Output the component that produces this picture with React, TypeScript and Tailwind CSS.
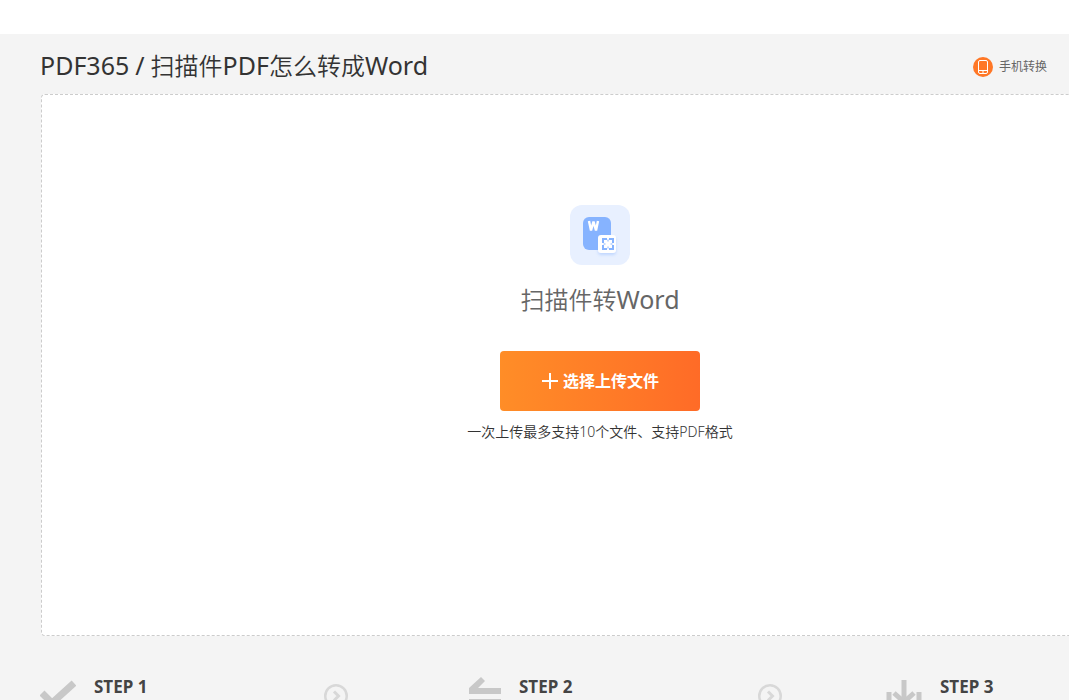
const STEPS = [
  { title: 'STEP 1', icon: 'check' },
  { title: 'STEP 2', icon: 'convert' },
  { title: 'STEP 3', icon: 'download' },
];

const PhoneIcon = () => (
  <svg width="20" height="20" viewBox="0 0 20 20" fill="none" aria-hidden="true">
    <circle cx="10" cy="10" r="10" fill="#ff7726" />
    <rect x="5.5" y="3.5" width="9" height="13" rx="1.5" stroke="#fff" />
    <path d="M6 13.5h8" stroke="#fff" />
    <path d="M9 15h2" stroke="#fff" />
  </svg>
);

const ScanToWordIcon = () => (
  <svg width="60" height="60" viewBox="0 0 60 60" fill="none" aria-hidden="true">
    <defs>
      <filter id="badge-shadow" x="-50%" y="-50%" width="200%" height="200%">
        <feDropShadow dx="0" dy="2" stdDeviation="1.5" floodColor="#86b1ff" floodOpacity="0.4" />
      </filter>
    </defs>
    <rect width="60" height="60" rx="12" fill="#e8f0ff" />
    <rect x="13" y="12" width="28" height="33" rx="6" fill="#86b3ff" />
    <path d="M19 16l2 9.5 2.5-9 2.5 9 2-9.5" stroke="#fff" strokeWidth="2.4" strokeLinejoin="bevel" />
    <rect x="28" y="30" width="18" height="18" rx="3" fill="#fff" filter="url(#badge-shadow)" />
    <path d="M37 34h-4v4M39 34h4v4M37 44h-4v-4M39 44h4v-4" stroke="#86b3ff" strokeWidth="2" />
    <path d="M38 34.5v2M38 41.5v2M33.5 39h2M40.5 39h2" stroke="#86b3ff" strokeWidth="1" />
  </svg>
);

const StepIcon = ({ name }: { name: string }) => {
  const width = name === 'convert' ? 32 : 36;
  return (
    <svg width={width} height="36" viewBox={`0 0 ${width} 36`} fill="none" stroke="#c8c8c8" aria-hidden="true">
      {name === 'check' && <path d="M2 17l10 10L34 7" strokeWidth="7" />}
      {name === 'convert' && (
        <g fill="#c8c8c8" stroke="none">
          <path d="M0 18v-6L12 1l4 4-7 7h23v6z" />
          <path d="M32 23v5L20 40l-4-4 7-7H0v-6z" />
        </g>
      )}
      {name === 'download' && (
        <>
          <path d="M18 4v20" strokeWidth="5" />
          <path d="M8 17l10 9 10-9" strokeWidth="5" />
          <path d="M3 16v18h30V16" strokeWidth="5" />
        </>
      )}
    </svg>
  );
};

const NextIcon = () => (
  <svg width="24" height="24" viewBox="0 0 24 24" fill="none" stroke="#d8d8d8" aria-hidden="true">
    <circle cx="12" cy="12" r="10.75" strokeWidth="2.5" />
    <path d="M10 7.5l4.5 4.5-4.5 4.5" strokeWidth="3" />
  </svg>
);

const Latin = ({ children }: { children: string }) => (
  <span className="text-[25px] font-normal">{children}</span>
);

export default function App() {
  return (
    <div className="h-screen overflow-hidden bg-[#f4f4f4] font-['Noto_Sans','Noto_Sans_CJK_SC',sans-serif] text-[#333]">
      <div className="h-[34px] bg-white" />

      <main className="min-w-[1200px] px-10">
        <header className="flex h-[60px] items-center justify-between pt-1">
          <h1 className="flex items-baseline gap-[6px] text-2xl font-[350]">
            <Latin>PDF365</Latin>
            <Latin>/</Latin>
            <span>
              扫描件<Latin>PDF</Latin>怎么转成<Latin>Word</Latin>
            </span>
          </h1>
          <a href="#mobile" className="mr-[113px] flex items-center gap-1.5 pt-0.5 text-xs text-[#666]">
            <PhoneIcon />
            手机转换
          </a>
        </header>

        <section className="mx-px flex h-[542px] flex-col items-center rounded border border-dashed border-[#ccc] bg-white pt-[110px]">
          <ScanToWordIcon />
          <h2 className="mt-4 h-9 text-2xl font-[350] leading-9 text-[#666]">
            扫描件转<Latin>Word</Latin>
          </h2>
          <button
            type="button"
            className="mt-[34px] flex h-[60px] w-[200px] cursor-pointer items-center justify-center gap-1 rounded bg-linear-to-r from-[#ff8d27] to-[#ff6b27] text-base font-bold text-white"
          >
            <svg width="18" height="18" viewBox="0 0 18 18" stroke="#fff" strokeWidth="2" aria-hidden="true">
              <path d="M9 1v16M1 9h16" />
            </svg>
            选择上传文件
          </button>
          <p className="mt-[11px] text-sm font-[350]">一次上传最多支持10个文件、支持PDF格式</p>
        </section>

        <ol className="grid grid-cols-[308fr_121fr_313fr_104fr_274fr] pt-10">
          {STEPS.map((step, i) => (
            <li key={step.title} className={i < STEPS.length - 1 ? 'col-span-2 grid grid-cols-subgrid' : 'flex'}>
              <div className="flex items-start">
                <StepIcon name={step.icon} />
                <h3 className="ml-[18px] text-[17px] font-bold leading-[22px] text-[#444]">{step.title}</h3>
                {i < STEPS.length - 1 && (
                  <span className="ml-auto pt-2">
                    <NextIcon />
                  </span>
                )}
              </div>
            </li>
          ))}
        </ol>
      </main>
    </div>
  );
}
